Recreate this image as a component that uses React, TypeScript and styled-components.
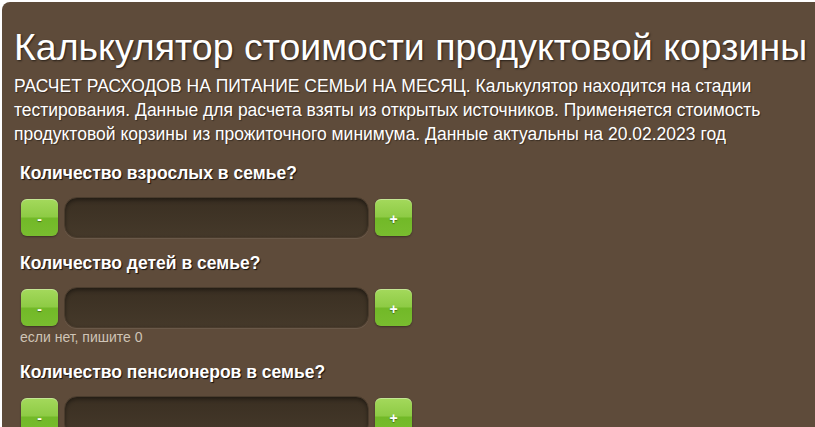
import styled, { createGlobalStyle } from "styled-components";

const GlobalStyle = createGlobalStyle`
	html, body {
		margin: 0;
		padding: 0;
		background: #ffffff;
	}
	body {
		font-family: "Liberation Sans", Arial, sans-serif;
		overflow: hidden;
	}
`;

const Page = styled.div`
	padding: 2px 0 0 2px;
	height: 425px;
	overflow: hidden;
`;

const Panel = styled.div`
	background-color: #5e4b3a;
	border-radius: 8px 0 0 0;
	padding: 23px 0 40px 12px;
	min-height: 500px;
	color: #ffffff;
`;

const Title = styled.h1`
	margin: 0 0 5px;
	font-size: 37.5px;
	font-weight: normal;
	line-height: 44px;
	white-space: nowrap;
	text-shadow: 1px 1px 2px rgba(0, 0, 0, 0.6);
`;

const Intro = styled.p`
	margin: 0 0 15px;
	font-size: 17.5px;
	line-height: 24px;
	max-width: 795px;
	text-shadow: 1px 1px 1px rgba(0, 0, 0, 0.4);
`;

const Field = styled.div`
	padding-left: 7px;
`;

const Label = styled.div`
	font-size: 17.5px;
	font-weight: bold;
	line-height: 20px;
	margin-left: -1px;
	padding: 2px 0 14px 0;
	text-shadow: 1px 1px 1px rgba(0, 0, 0, 0.8);
`;

const Row = styled.div`
	display: flex;
	align-items: center;
	gap: 6px;
	width: 391px;
`;

const StepButton = styled.button`
	width: 37px;
	height: 37px;
	flex: none;
	border: none;
	border-radius: 6px;
	padding: 4px 0 0;
	font-family: "Liberation Sans", Arial, sans-serif;
	font-size: 14px;
	font-weight: bold;
	line-height: 33px;
	color: #ffffff;
	text-shadow: 0 1px 1px rgba(0, 0, 0, 0.4);
	background: linear-gradient(
		to bottom,
		#a4d95c 0%,
		#8ecb45 48%,
		#72b928 52%,
		#79bd2f 100%
	);
	box-shadow: inset 0 1px 0 rgba(255, 255, 255, 0.35), 0 1px 2px rgba(0, 0, 0, 0.35);
`;

const Input = styled.input`
	flex: 1;
	min-width: 0;
	height: 41px;
	box-sizing: border-box;
	border: 1px solid #4a3c2d;
	border-radius: 13px;
	background: linear-gradient(to bottom, #3a2f22 0%, #45392a 100%);
	box-shadow: inset 0 2px 4px rgba(0, 0, 0, 0.45), 0 1px 0 rgba(255, 255, 255, 0.08);
	color: #ffffff;
	font-size: 16px;
	padding: 0 12px;
	outline: none;
`;

const Hint = styled.div`
	font-size: 14px;
	line-height: 16px;
	color: #cfc4b6;
	margin-left: -1px;
	padding: 1px 0 2px;
`;

const Gap = styled.div`
	height: 13px;
`;

const fields = [
  { label: "Количество взрослых в семье?", hint: "" },
  { label: "Количество детей в семье?", hint: "если нет, пишите 0" },
  { label: "Количество пенсионеров в семье?", hint: "" },
];

export default function App() {
  return (
    <>
      <GlobalStyle />
      <Page>
        <Panel>
          <Title>Калькулятор стоимости продуктовой корзины</Title>
          <Intro>
            РАСЧЕТ РАСХОДОВ НА ПИТАНИЕ СЕМЬИ НА МЕСЯЦ. Калькулятор находится на
            стадии тестирования. Данные для расчета взяты из открытых
            источников. Применяется стоимость продуктовой корзины из
            прожиточного минимума. Данные актуальны на 20.02.2023 год
          </Intro>
          {fields.map((f, i) => (
            <Field key={i}>
              <Label>{f.label}</Label>
              <Row>
                <StepButton>-</StepButton>
                <Input type="text" />
                <StepButton>+</StepButton>
              </Row>
              {f.hint && <Hint>{f.hint}</Hint>}
              <Gap />
            </Field>
          ))}
        </Panel>
      </Page>
    </>
  );
}
